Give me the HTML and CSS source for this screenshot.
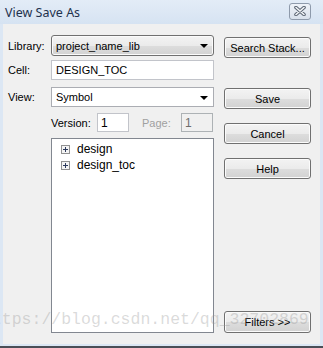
FILE: index.html
```html
<!DOCTYPE html>
<html lang="en">
<head>
    <meta charset="UTF-8">
    <title>View Save As</title>
    <link rel="stylesheet" href="styles.css">
</head>
<body>

<div class="window">
    <div class="titlebar">
        <span class="title">View Save As</span>
        <div class="close">
            <svg width="14" height="10" viewBox="0 0 14 10">
                <path d="M3 1.5 L11 8.5 M11 1.5 L3 8.5" stroke="#5b6573" stroke-width="3.6" stroke-linecap="round"/>
                <path d="M3 1.5 L11 8.5 M11 1.5 L3 8.5" stroke="#f4f6f9" stroke-width="1.6" stroke-linecap="round"/>
            </svg>
        </div>
    </div>

    <div class="content">
        <div class="form">
            <div class="row row-library">
                <label>Library:</label>
                <div class="combo combo-btn">project_name_lib<span class="arrow"></span></div>
            </div>
            <div class="row row-cell">
                <label>Cell:</label>
                <div class="field">DESIGN_TOC</div>
            </div>
            <div class="row row-view">
                <label>View:</label>
                <div class="combo combo-edit">Symbol<span class="arrow"></span></div>
            </div>
            <div class="version-row">
                <span class="version-label">Version:</span>
                <div class="field small">1</div>
                <span class="page-label">Page:</span>
                <div class="field small off">1</div>
            </div>
            <div class="list">
                <div class="item">
                    <svg class="plus" width="9" height="9" viewBox="0 0 9 9">
                        <rect x="0.5" y="0.5" width="8" height="8" fill="#f4f4f4" stroke="#919191"/>
                        <path d="M2 4.5 H7 M4.5 2 V7" stroke="#2c3a5c" stroke-width="1"/>
                    </svg>
                    design
                </div>
                <div class="item">
                    <svg class="plus" width="9" height="9" viewBox="0 0 9 9">
                        <rect x="0.5" y="0.5" width="8" height="8" fill="#f4f4f4" stroke="#919191"/>
                        <path d="M2 4.5 H7 M4.5 2 V7" stroke="#2c3a5c" stroke-width="1"/>
                    </svg>
                    design_toc
                </div>
            </div>
        </div>

        <div class="buttons">
            <button class="btn btn-search">Search Stack...</button>
            <button class="btn btn-save">Save</button>
            <button class="btn">Cancel</button>
            <button class="btn">Help</button>
            <button class="btn btn-filters">Filters &gt;&gt;</button>
        </div>
    </div>

    <div class="watermark">https://blog.csdn.net/qq_32702869</div>
</div>

</body>
</html>
```

FILE: styles.css
```css
body {
    margin: 0;
    padding: 0;
    font-family: 'Liberation Sans', Arial, sans-serif;
    font-size: 11px;
    color: #000;
}

.window {
    position: relative;
    width: 323px;
    height: 348px;
    box-sizing: border-box;
    background-color: #dce7f4;
    border-bottom: 2px solid #4a4f57;
    overflow: hidden;
    display: flex;
    flex-direction: column;
}

.titlebar {
    height: 24px;
    display: flex;
    align-items: center;
    justify-content: space-between;
    padding: 0 12px 0 5px;
    background: linear-gradient(#e3ecf7, #d6e3f2);
}

.title {
    font-family: 'Noto Sans', sans-serif;
    font-size: 12.5px;
    color: #1f324d;
    margin-top: 1px;
}

.close {
    width: 20px;
    height: 15px;
    margin-top: -2px;
    border: 1px solid #8e9aab;
    border-radius: 3px;
    background: linear-gradient(#eef2f8, #d9e1ec);
    display: flex;
    align-items: center;
    justify-content: center;
}

.content {
    flex: 1;
    margin: 0 3px 2px 3px;
    background-color: #f0f0f0;
    display: flex;
    padding: 11px 9px 11px 5px;
}

.form {
    width: 206px;
    display: flex;
    flex-direction: column;
}

.row {
    display: flex;
    align-items: center;
}

.row label {
    width: 43px;
}

.row-cell {
    margin-top: 4px;
}

.row-view {
    margin-top: 7px;
}

.combo {
    position: relative;
    width: 163px;
    box-sizing: border-box;
    display: flex;
    align-items: center;
    padding-left: 4px;
}

.combo-btn {
    height: 21px;
    border: 1px solid #707070;
    border-radius: 3px;
    background: linear-gradient(#f3f3f3 0%, #ebebeb 50%, #dddddd 51%, #d2d2d2 100%);
    box-shadow: inset 0 0 0 1px #fbfbfb;
}

.combo-edit {
    height: 20px;
    border: 1px solid #abadb3;
    background-color: #fff;
}

.arrow {
    position: absolute;
    right: 5px;
    top: 8px;
    width: 0;
    height: 0;
    border-left: 4px solid transparent;
    border-right: 4px solid transparent;
    border-top: 4px solid #000;
}

.field {
    width: 163px;
    height: 20px;
    box-sizing: border-box;
    border: 1px solid #c2c4ca;
    background-color: #fff;
    display: flex;
    align-items: center;
    padding-left: 4px;
}

.version-row {
    margin-top: 6px;
    padding-left: 43px;
    display: flex;
    align-items: center;
    height: 19px;
}

.version-label {
    width: 46px;
}

.field.small {
    width: 32px;
    height: 19px;
    padding-left: 3px;
    font-size: 12px;
}

.page-label {
    margin-left: 13px;
    width: 39px;
    color: #a0a0a0;
}

.field.off {
    background-color: #f0f0f0;
    border-color: #adb2b5;
    color: #6d6d6d;
}

.list {
    margin-top: 6px;
    margin-left: 43px;
    height: 195px;
    box-sizing: border-box;
    border: 1px solid #828790;
    background-color: #fff;
    padding: 2px 0 0 9px;
}

.item {
    height: 16px;
    display: flex;
    align-items: center;
    font-size: 12px;
}

.plus {
    margin-right: 7px;
}

.buttons {
    margin-left: 10px;
    width: 87px;
    display: flex;
    flex-direction: column;
}

.btn {
    height: 21px;
    font-family: 'Liberation Sans', Arial, sans-serif;
    font-size: 11px;
    color: #000;
    border: 1px solid #707070;
    border-radius: 3px;
    background: linear-gradient(#f3f3f3 0%, #ebebeb 50%, #dddddd 51%, #d2d2d2 100%);
    box-shadow: inset 0 0 0 1px #fbfbfb;
    margin-top: 14px;
    padding: 0;
}

.btn-search {
    margin-top: 2px;
}

.btn-save {
    margin-top: 30px;
}

.btn-filters {
    margin-top: auto;
    height: 22px;
}

.watermark {
    position: absolute;
    left: -18px;
    top: 310px;
    font-family: 'Liberation Mono', monospace;
    font-size: 16.5px;
    line-height: 20px;
    color: rgba(150, 150, 150, 0.35);
    white-space: nowrap;
    pointer-events: none;
}
```
